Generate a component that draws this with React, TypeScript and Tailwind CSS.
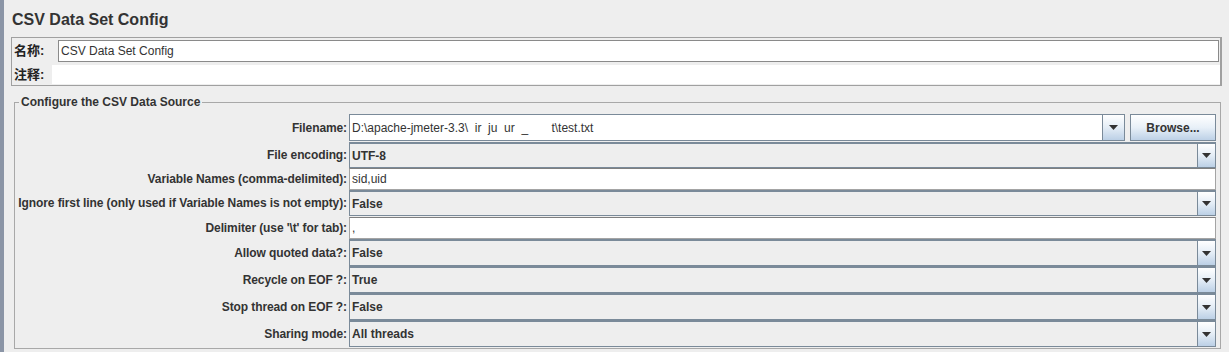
import React from "react";

const FONT = '"Liberation Sans", Arial, "Noto Sans CJK SC", sans-serif';

function Arrow() {
  return (
    <svg width="9" height="5" viewBox="0 0 9 5">
      <polygon points="0,0 9,0 4.5,5" fill="#333333" />
    </svg>
  );
}

function ArrowButton({ className = "" }: { className?: string }) {
  return (
    <div
      className={`flex items-center justify-center bg-linear-to-b from-white via-[#e4edf6] to-[#bcd0e6] ${className}`}
    >
      <Arrow />
    </div>
  );
}

function Combo({ value }: { value: string }) {
  return (
    <div className="flex h-full w-full border border-[#7a8a99] border-t-2 bg-[#eeeeee]">
      <div className="flex flex-1 items-center pl-[2px] text-[12px] font-bold text-[#333333]">
        {value}
      </div>
      <ArrowButton className="w-[18px] border-l border-[#7a8a99]" />
    </div>
  );
}

function TextField({ value }: { value: string }) {
  return (
    <div className="flex h-full w-full items-center border border-[#a4a4a4] border-t-[#7f7f7f] bg-white pl-[2px] text-[12px] text-[#333333]">
      {value}
    </div>
  );
}

function Row({
  label,
  h,
  children,
  mt = 0,
}: {
  label: string;
  h: number;
  children: React.ReactNode;
  mt?: number;
}) {
  return (
    <div className="flex" style={{ height: h, marginTop: mt }}>
      <div className="flex w-[333px] shrink-0 items-center justify-end whitespace-nowrap pr-[2px] text-[12px] font-bold tracking-[-0.1px] text-[#333333]">
        {label}
      </div>
      <div className="flex min-w-0 flex-1 items-stretch">{children}</div>
    </div>
  );
}

export default function App() {
  return (
    <div
      className="flex h-[352px] w-[1229px] overflow-hidden bg-[#eeeeee]"
      style={{ fontFamily: FONT }}
    >
      <div className="w-[4px] bg-[#8b95a6]" />
      <div className="flex flex-1 flex-col pl-[7px]">
        <div className="h-[37px] pl-[1px] pt-[10px] text-[16px] font-bold leading-[20px] text-[#333333]">
          CSV Data Set Config
        </div>

        <div className="mr-[7px] flex h-[49px] flex-col border border-[#a0a0a0] border-r-2">
          <div className="mt-[2px] flex h-[22px]">
            <div className="flex w-[46px] items-center pl-[2px] text-[13px] font-bold text-[#222222]">
              名称:
            </div>
            <div className="mr-[1px] flex flex-1 items-center border border-[#8a8a8a] bg-white pl-[2px] text-[12px] text-[#333333]">
              CSV Data Set Config
            </div>
          </div>
          <div className="mt-[3px] flex h-[19px]">
            <div className="flex w-[40px] items-center pl-[2px] text-[13px] font-bold text-[#222222]">
              注释:
            </div>
            <div className="flex-1 bg-white" />
          </div>
        </div>

        <div className="relative ml-[3px] mr-[8px] mt-[16px] h-[247px] border border-[#a8a8a8] pl-[1px] pr-[4px] pt-[11px]">
          <div className="absolute left-[4px] top-[-8px] bg-[#eeeeee] px-[2px] text-[12px] font-bold leading-[14px] text-[#333333]">
            Configure the CSV Data Source
          </div>

          <Row label="Filename:" h={27}>
            <div className="flex h-full flex-1 items-center border border-[#7a8a99] bg-white pl-[2px] text-[12px] text-[#333333] whitespace-pre">
              {"D:\\apache-jmeter-3.3\\  ir  ju  ur  _       t\\test.txt"}
            </div>
            <ArrowButton className="w-[22px] border border-l-0 border-[#7a8a99]" />
            <div className="ml-[5px] flex w-[86px] items-center justify-center border border-[#7a8a99] bg-linear-to-b from-white via-[#e8f0f8] to-[#bdd1e6] text-[12px] font-bold text-[#333333]">
              Browse...
            </div>
          </Row>
          <Row label="File encoding:" h={26} mt={1}>
            <Combo value="UTF-8" />
          </Row>
          <Row label="Variable Names (comma-delimited):" h={22}>
            <TextField value="sid,uid" />
          </Row>
          <Row label="Ignore first line (only used if Variable Names is not empty):" h={26}>
            <Combo value="False" />
          </Row>
          <Row label="Delimiter (use '\t' for tab):" h={22} mt={1}>
            <TextField value="," />
          </Row>
          <Row label="Allow quoted data?:" h={27}>
            <Combo value="False" />
          </Row>
          <Row label="Recycle on EOF ?:" h={27}>
            <Combo value="True" />
          </Row>
          <Row label="Stop thread on EOF ?:" h={27}>
            <Combo value="False" />
          </Row>
          <Row label="Sharing mode:" h={27}>
            <Combo value="All threads" />
          </Row>
        </div>
      </div>
    </div>
  );
}
